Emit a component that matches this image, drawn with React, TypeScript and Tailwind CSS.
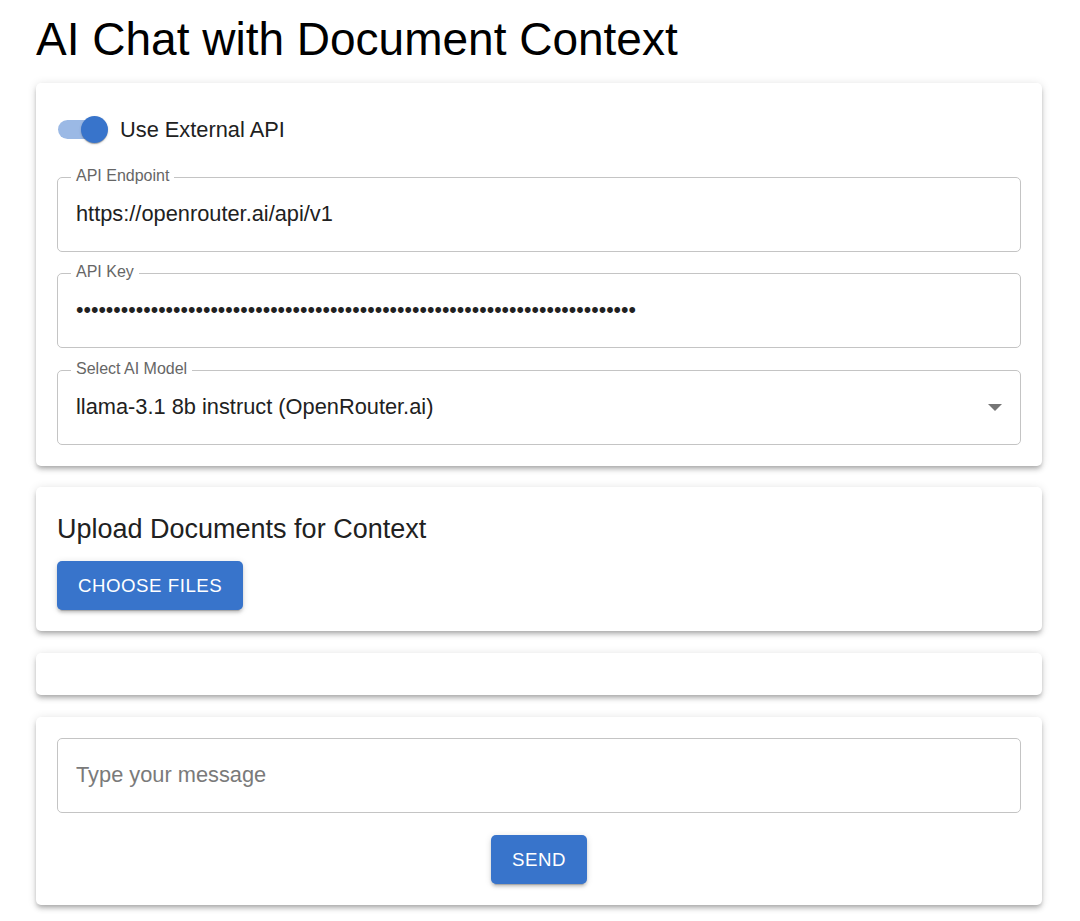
import React from "react";

const cardShadow =
  "shadow-[0_3px_4px_-2px_rgba(0,0,0,0.2),0_4px_5px_0_rgba(0,0,0,0.14),0_1px_10px_0_rgba(0,0,0,0.12)]";

const buttonClass =
  "h-[49px] px-[21px] rounded-[5px] bg-[#3874cb] text-white text-[18.67px] font-normal uppercase tracking-[0.53px] shadow-[0_4px_1px_-3px_rgba(0,0,0,0.2),0_3px_3px_0_rgba(0,0,0,0.14),0_1px_7px_0_rgba(0,0,0,0.12)]";

function OutlinedField({
  label,
  children,
  className = "",
}: {
  label?: string;
  children: React.ReactNode;
  className?: string;
}) {
  return (
    <div
      className={`relative h-[75px] rounded-[5px] border border-[#c4c4c4] flex items-center pl-[18px] pr-[18px] ${className}`}
    >
      {label && (
        <span className="absolute left-[13px] top-[-12px] px-[5px] bg-white text-[16px] leading-[20px] text-[#666666]">
          {label}
        </span>
      )}
      {children}
    </div>
  );
}

export default function App() {
  const apiKey = "sk-or-v1-3f9a1c2b7d8e4f60a1b2c3d4e5f60718293a4b5c6d7e8f90a1b2c3d4e5f607182a";

  return (
    <div className="min-h-screen bg-white font-['Liberation_Sans',Arial,sans-serif] text-[#212121]">
      <div className="ml-[36px] w-[1006px] pt-[11px] pb-[16px]">
        <h1 className="h-[57px] leading-[57px] text-[46px] font-normal text-black mb-[15px]">
          AI Chat with Document Context
        </h1>

        {/* settings */}
        <div className={`bg-white rounded-[5px] p-[21px] ${cardShadow}`}>
          <label className="h-[51px] flex items-center">
            <span className="relative w-[46px] h-[19px] rounded-full bg-[#9bb9e5] ml-[1px]">
              <span className="absolute right-[-4px] top-[-4px] w-[27px] h-[27px] rounded-full bg-[#3874cb] shadow-[0_2px_1px_-1px_rgba(0,0,0,0.2),0_1px_1px_0_rgba(0,0,0,0.14),0_1px_3px_0_rgba(0,0,0,0.12)]" />
            </span>
            <span className="ml-[16px] mt-[2px] text-[21.8px]">Use External API</span>
          </label>

          <OutlinedField label="API Endpoint" className="mt-[22px]">
            <input
              readOnly
              defaultValue="https://openrouter.ai/api/v1"
              className="w-full bg-transparent outline-none text-[21.8px] text-[#212121]"
            />
          </OutlinedField>

          <OutlinedField label="API Key" className="mt-[21px]">
            <input
              type="password"
              readOnly
              defaultValue={apiKey}
              className="w-full bg-transparent outline-none text-[21.33px] text-[#212121]"
            />
          </OutlinedField>

          <OutlinedField label="Select AI Model" className="mt-[22px] justify-between">
            <span className="text-[21.8px]">llama-3.1 8b instruct (OpenRouter.ai)</span>
            <svg width="14" height="7" viewBox="0 0 14 7">
              <path d="M0 0 L7 7 L14 0 Z" fill="#757575" />
            </svg>
          </OutlinedField>
        </div>

        {/* upload */}
        <div className={`mt-[21px] bg-white rounded-[5px] p-[21px] ${cardShadow}`}>
          <h2 className="h-[43px] leading-[43px] text-[27px] font-normal">
            Upload Documents for Context
          </h2>
          <button className={`mt-[10px] ${buttonClass}`}>Choose Files</button>
        </div>

        {/* messages */}
        <div className={`mt-[22px] h-[42px] bg-white rounded-[5px] ${cardShadow}`} />

        {/* input */}
        <div className={`mt-[22px] bg-white rounded-[5px] p-[21px] flex flex-col ${cardShadow}`}>
          <OutlinedField>
            <input
              placeholder="Type your message"
              className="w-full bg-transparent outline-none text-[21.8px] text-[#212121] placeholder:text-[#7a7a7a]"
            />
          </OutlinedField>
          <div className="mt-[22px] flex justify-center">
            <button className={buttonClass}>Send</button>
          </div>
        </div>
      </div>
    </div>
  );
}
